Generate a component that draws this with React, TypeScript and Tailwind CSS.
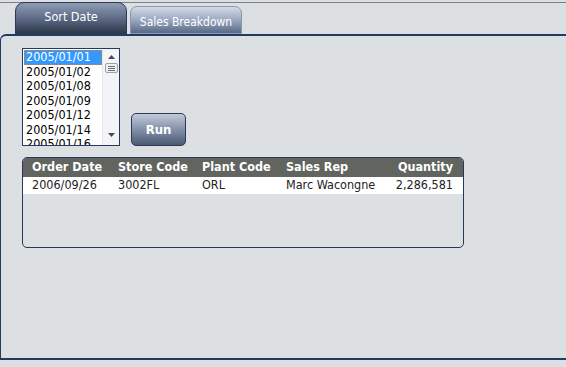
import React from "react";

const dates = ["2005/01/01", "2005/01/02", "2005/01/08", "2005/01/09", "2005/01/12", "2005/01/14", "2005/01/16"];

export default function App() {
  return (
    <div
      className="w-[566px] h-[367px] bg-[#dce0e3] overflow-hidden pt-[2px]"
      style={{ fontFamily: '"DejaVu Sans Condensed", "DejaVu Sans", Tahoma, sans-serif' }}
    >
      {/* tab strip */}
      <div className="h-[32px] border-t border-[#7c7f85] flex items-end pl-[15px] gap-[3px]">
        <div className="w-[112px] h-[33px] -mb-[1px] rounded-t-[9px] border border-[#2b3a55] bg-gradient-to-b from-[#8f9cb5] via-[#5d6b86] to-[#2c3649] flex justify-center pt-[5px] text-white text-[12.5px] relative z-10 whitespace-nowrap">
          Sort Date
        </div>
        <div className="w-[112px] h-[28px] rounded-t-[7px] border border-[#8a97ad] bg-gradient-to-b from-[#d3dbe8] via-[#9aa8c0] to-[#5a6986] flex justify-center pt-[6px] text-white text-[12px] whitespace-nowrap">
          Sales Breakdown
        </div>
      </div>
      {/* panel */}
      <div className="w-[600px] h-[326px] border-t-2 border-l border-b-2 border-[#1f3b66] rounded-tl-[6px] pl-[21px] pt-[12px]">
        <div className="flex items-end gap-[11px]">
          <div className="w-[98px] h-[98px] border border-[#24395c] bg-white flex overflow-hidden">
            <div className="flex-1 flex flex-col pt-[1px] pl-[1px] text-[12.5px] leading-[14.5px] text-black whitespace-nowrap">
              {dates.map((d, i) => (
                <div
                  key={d}
                  className={
                    i === 0
                      ? "bg-[#3399ff] text-white pl-[2px] outline-1 outline-dotted outline-[#e07b1a] -outline-offset-1"
                      : "pl-[2px]"
                  }
                >
                  {d}
                </div>
              ))}
            </div>
            <div className="w-[17px] bg-[#f2f4f7] border-l border-[#e4e8ee] flex flex-col items-center relative">
              <svg width="9" height="6" viewBox="0 0 9 6" className="mt-[5px]">
                <path d="M1 5 L4.5 1 L8 5 Z" fill="#4a4a4a" />
              </svg>
              <div className="mt-[3px] w-[13px] h-[10px] border border-[#9aa0a8] rounded-[2px] bg-[#eef0f3] flex flex-col justify-center gap-[1px] px-[2px]">
                <div className="h-[1px] bg-[#6b7078]" />
                <div className="h-[1px] bg-[#6b7078]" />
                <div className="h-[1px] bg-[#6b7078]" />
              </div>
              <svg width="9" height="6" viewBox="0 0 9 6" className="absolute bottom-[7px]">
                <path d="M1 1 L4.5 5 L8 1 Z" fill="#4a4a4a" />
              </svg>
            </div>
          </div>
          <button className="w-[55px] h-[33px] rounded-[5px] border border-[#2b3a55] bg-gradient-to-b from-[#c2cad9] via-[#8390aa] to-[#4d5a74] text-white text-[13px] font-bold">
            Run
          </button>
        </div>
        <div className="mt-[11px] w-[442px] h-[91px] border border-[#24395c] rounded-[5px] overflow-hidden bg-[#dce0e3] text-[12.5px] whitespace-nowrap">
          <div className="h-[19px] bg-[#62645f] text-white font-bold flex items-center pl-[9px] pr-[10px]">
            <div className="w-[86px]">Order Date</div>
            <div className="w-[84px]">Store Code</div>
            <div className="w-[84px]">Plant Code</div>
            <div className="w-[84px]">Sales Rep</div>
            <div className="flex-1 text-right">Quantity</div>
          </div>
          <div className="h-[17px] bg-white text-[#222] flex items-center pl-[9px] pr-[10px]">
            <div className="w-[86px]">2006/09/26</div>
            <div className="w-[84px]">3002FL</div>
            <div className="w-[84px]">ORL</div>
            <div className="w-[84px]">Marc Wacongne</div>
            <div className="flex-1 text-right">2,286,581</div>
          </div>
        </div>
      </div>
    </div>
  );
}
